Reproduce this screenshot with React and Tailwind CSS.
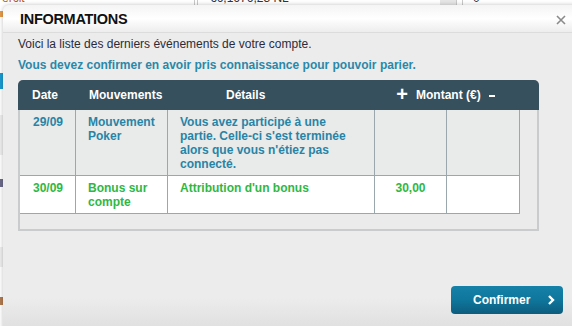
import React from 'react';

const rows = [
  {
    date: '29/09',
    type: 'Mouvement Poker',
    detail: "Vous avez participé à une partie. Celle-ci s'est terminée alors que vous n'étiez pas connecté.",
    amount: '',
    tone: 'bg-[#e9eaea] text-[#2884a6]',
  },
  {
    date: '30/09',
    type: 'Bonus sur compte',
    detail: "Attribution d'un bonus",
    amount: '30,00',
    tone: 'bg-white text-[#2fb744]',
  },
];

const Backdrop = () => (
  <div className="absolute inset-0 bg-white">
    {/* bits of the page behind the modal */}
    <div className="flex h-[5px] overflow-hidden text-[12px] text-[#333] leading-[14px]">
      <div className="w-[194px] -mt-[9px] pl-[2px] text-[#c05a18]">ercit</div>
      <div className="w-[3px] border-l border-[#c9c9c9]" />
      <div className="w-[243px] border-l border-[#c9c9c9] pl-[12px] -mt-[9px]">€6,1676,23 NL</div>
      <div className="w-[16px] bg-[#e6e6e6]" />
      <div className="w-[6px] border-l border-[#c9c9c9]" />
      <div className="border-l border-[#c9c9c9] pl-[10px] -mt-[9px]">0</div>
    </div>
    <div className="w-[3px] flex flex-col">
      <div className="h-[6px] mt-[6px] bg-[#e69a4a]" />
      <div className="h-[16px] mt-[56px] bg-[#1a9ad0]" />
      <div className="h-[40px] mt-[26px] bg-[#eeeeee]" />
      <div className="h-[8px] mt-[24px] bg-[#6b6b8a]" />
      <div className="h-[20px] mt-[60px] bg-[#eeeeee]" />
      <div className="h-[8px] mt-[30px] bg-[#b07a50]" />
    </div>
  </div>
);

export default function App() {
  return (
    <div
      className="relative w-[572px] h-[326px] overflow-hidden"
      style={{ fontFamily: '"Liberation Sans", Arial, sans-serif' }}
    >
      <Backdrop />

      <div className="absolute left-[3px] top-[5px] w-[590px] h-[340px] rounded-tl-[6px] bg-[#ececec] shadow-[0_0_4px_rgba(0,0,0,0.25)] flex flex-col">
        {/* title bar */}
        <div className="h-[28px] flex items-center justify-between rounded-tl-[6px] border-b border-[#dcdcdc] bg-gradient-to-b from-[#f4f4f4] via-white to-[#ededed] pl-[17px] pr-[27px]">
          <h2 className="text-[14.5px] font-bold tracking-[-0.3px] text-[#111] leading-none pt-[1px]">
            INFORMATIONS
          </h2>
          <svg width="10" height="10" viewBox="0 0 10 10" className="mt-[3px]">
            <path d="M1 1L9 9M9 1L1 9" stroke="#8a8a8a" strokeWidth="1.6" />
          </svg>
        </div>

        {/* body */}
        <div className="flex-1 flex flex-col pl-[15px] bg-gradient-to-b from-[#ececec] from-[85%] to-[#d9d9d9]">
          <p className="mt-[4px] text-[12px] leading-[14px] text-[#2b2b3b]">
            Voici la liste des derniers événements de votre compte.
          </p>
          <p className="mt-[7px] text-[12px] leading-[14px] text-[#2a88a9] font-semibold">
            Vous devez confirmer en avoir pris connaissance pour pouvoir parier.
          </p>

          {/* table box */}
          <div className="mt-[8px] w-[521px] h-[151px] border-2 border-t-0 border-[#c8cccd] rounded-t-[5px] bg-[#ebebeb]">
            <div className="h-[30px] -mx-[2px] rounded-t-[5px] bg-[#36505e] flex items-center text-white text-[12px] font-bold">
              <span className="ml-[14px] w-[57px]">Date</span>
              <span className="w-[137px]">Mouvements</span>
              <span>Détails</span>
              <span className="ml-[131px] text-[20px] leading-none font-bold -mt-[2px]">+</span>
              <span className="ml-[8px]">Montant (€)</span>
              <span className="ml-[8px] mt-[1px] w-[6px] h-[2px] bg-white" />
            </div>

            <div className="w-[500px] border-b border-[#9aa8ae]">
              {rows.map((r, i) => (
                <div
                  key={i}
                  className={`grid grid-cols-[55px_92px_207px_72px_1fr] text-[12px] leading-[14px] font-bold ${r.tone} ${i > 0 ? 'border-t border-[#9aa8ae]' : ''}`}
                >
                  <div className="pl-[13px] pt-[5px] pb-[4px]">{r.date}</div>
                  <div className="border-l border-[#9aa8ae] pl-[12px] pr-[6px] pt-[5px] pb-[4px]">{r.type}</div>
                  <div className="border-l border-[#9aa8ae] pl-[12px] pr-[14px] pt-[5px] pb-[4px]">{r.detail}</div>
                  <div className="border-l border-[#9aa8ae] text-center pt-[5px] pb-[4px]">{r.amount}</div>
                  <div className="border-l border-r border-[#9aa8ae]" />
                </div>
              ))}
            </div>
          </div>

          {/* footer */}
          <div className="mt-[55px] pl-[433px]">
            <button className="w-[112px] h-[28px] rounded-[4px] bg-gradient-to-b from-[#1681a8] via-[#0f769c] to-[#0c5d7d] text-white text-[12px] font-bold flex items-center pl-[22px]">
              Confirmer
              <svg width="8" height="10" viewBox="0 0 8 10" className="ml-[17px]">
                <path d="M2 1L6 5L2 9" fill="none" stroke="white" strokeWidth="2.4" />
              </svg>
            </button>
          </div>
        </div>
      </div>
    </div>
  );
}
